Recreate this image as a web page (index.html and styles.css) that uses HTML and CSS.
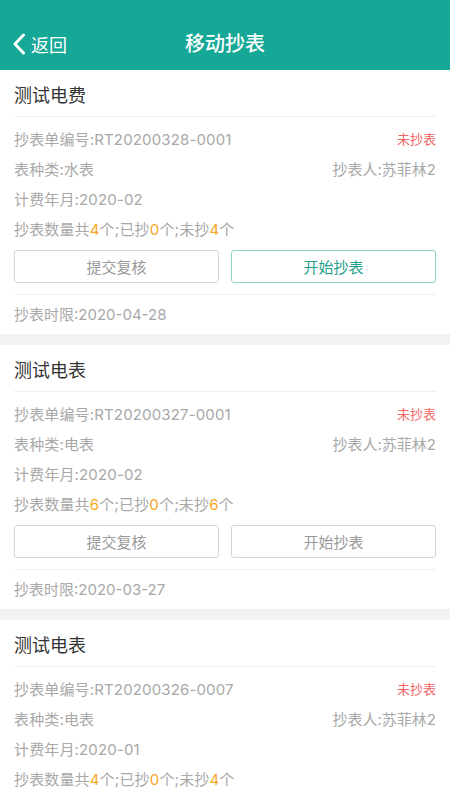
FILE: index.html
```html
<!DOCTYPE html>
<html lang="zh">
<head>
<meta charset="utf-8">
<title>移动抄表</title>
<link rel="stylesheet" href="styles.css">
</head>
<body>
<header class="topbar">
  <div class="back">
    <svg class="chev" width="14" height="22" viewBox="0 0 14 22"><path d="M11.5 2 L3 11 L11.5 20" fill="none" stroke="#fff" stroke-width="3" stroke-linecap="round" stroke-linejoin="round"/></svg>
    <span>返回</span>
  </div>
  <h1 class="title">移动抄表</h1>
</header>
<main class="list">
  <section class="card">
    <div class="card-title">测试电费</div>
    <div class="rows">
      <div class="row"><span>抄表单编号:RT20200328-0001</span><span class="status">未抄表</span></div>
      <div class="row"><span>表种类:水表</span><span>抄表人:苏菲林2</span></div>
      <div class="row"><span>计费年月:2020-02</span></div>
      <div class="row"><span>抄表数量共<b class="num">4</b>个;已抄<b class="num">0</b>个;未抄<b class="num">4</b>个</span></div>
    </div>
    <div class="actions">
      <button class="btn">提交复核</button>
      <button class="btn btn-active">开始抄表</button>
    </div>
    <div class="deadline">抄表时限:2020-04-28</div>
  </section>
  <section class="card">
    <div class="card-title">测试电表</div>
    <div class="rows">
      <div class="row"><span>抄表单编号:RT20200327-0001</span><span class="status">未抄表</span></div>
      <div class="row"><span>表种类:电表</span><span>抄表人:苏菲林2</span></div>
      <div class="row"><span>计费年月:2020-02</span></div>
      <div class="row"><span>抄表数量共<b class="num">6</b>个;已抄<b class="num">0</b>个;未抄<b class="num">6</b>个</span></div>
    </div>
    <div class="actions">
      <button class="btn">提交复核</button>
      <button class="btn">开始抄表</button>
    </div>
    <div class="deadline">抄表时限:2020-03-27</div>
  </section>
  <section class="card">
    <div class="card-title">测试电表</div>
    <div class="rows">
      <div class="row"><span>抄表单编号:RT20200326-0007</span><span class="status">未抄表</span></div>
      <div class="row"><span>表种类:电表</span><span>抄表人:苏菲林2</span></div>
      <div class="row"><span>计费年月:2020-01</span></div>
      <div class="row"><span>抄表数量共<b class="num">4</b>个;已抄<b class="num">0</b>个;未抄<b class="num">4</b>个</span></div>
    </div>
    <div class="actions">
      <button class="btn">提交复核</button>
      <button class="btn">开始抄表</button>
    </div>
    <div class="deadline">抄表时限:2020-02-28</div>
  </section>
</main>
</body>
</html>
```
FILE: styles.css
```css
* { box-sizing: border-box; }
html, body { margin: 0; padding: 0; }
body {
  width: 450px;
  height: 800px;
  overflow: hidden;
  background: #f2f2f2;
  font-family: Inter, "Noto Sans CJK SC", "Noto Sans", sans-serif;
}
.topbar {
  height: 70px;
  background: #16a897;
  display: flex;
  align-items: flex-end;
  padding: 0 0 11px 12px;
  position: relative;
  color: #fff;
}
.back {
  display: flex;
  align-items: center;
  gap: 5px;
  font-size: 18px;
  height: 30px;
}
.chev { display: block; margin-top: -1px; }
.title {
  margin: 0;
  position: absolute;
  left: 0;
  right: 0;
  bottom: 11px;
  height: 30px;
  line-height: 30px;
  text-align: center;
  font-size: 20px;
  font-weight: 500;
  pointer-events: none;
}
.list { display: flex; flex-direction: column; gap: 11px; }
.card {
  background: #fff;
  padding: 0 14px;
}
.card-title {
  height: 47px;
  line-height: 51px;
  font-size: 18px;
  color: #333;
  border-bottom: 1px solid #eee;
}
.rows { padding-top: 6px; }
.row {
  height: 30px;
  display: flex;
  justify-content: space-between;
  align-items: center;
  font-size: 15px;
  color: #a8a8a8;
}
.row span:first-child { letter-spacing: 0.15px; }
.status { color: #f06464; font-size: 13px; }
.num { font-weight: normal; color: #f5a623; }
.actions {
  display: grid;
  grid-template-columns: 1fr 1fr;
  gap: 12px;
  margin-top: 7px;
  padding-bottom: 11px;
  border-bottom: 1px solid #f0f0f0;
}
.btn {
  height: 33px;
  border: 1px solid #d6d6d6;
  border-radius: 3px;
  background: #fff;
  color: #999;
  font-family: inherit;
  font-size: 15px;
  padding: 0;
}
.btn-active { border-color: #8fd2c8; color: #1f9f8c; }
.deadline {
  height: 39px;
  line-height: 39px;
  font-size: 15px;
  color: #a8a8a8;
}
```
